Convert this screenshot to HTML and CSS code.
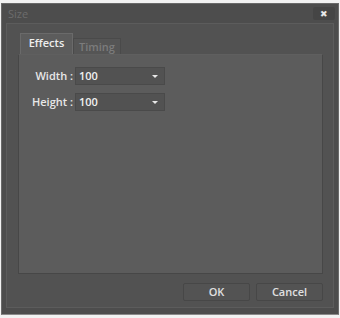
FILE: index.html
```html
<!DOCTYPE html>
<html lang="en">
<head>
    <meta charset="UTF-8">
    <meta name="viewport" content="width=device-width, initial-scale=1.0">
    <title>Size</title>
    <link rel="stylesheet" href="styles.css">
</head>
<body>
    <div class="dialog">
        <div class="titlebar">
            <span class="title">Size</span>
            <button class="close">&#x2716;</button>
        </div>
        <div class="frame">
            <div class="tabs">
                <div class="tab active">Effects</div>
                <div class="tab">Timing</div>
            </div>
            <div class="panel">
                <div class="row">
                    <label>Width :</label>
                    <div class="select"><span>100</span><span class="arrow"></span></div>
                </div>
                <div class="row">
                    <label>Height :</label>
                    <div class="select"><span>100</span><span class="arrow"></span></div>
                </div>
            </div>
            <div class="buttons">
                <button class="btn ok">OK</button>
                <button class="btn">Cancel</button>
            </div>
        </div>
    </div>
</body>
</html>
```
FILE: styles.css
```css
*{
    box-sizing: border-box;
    margin: 0;
    padding: 0;
    font-family: "Open Sans", "Liberation Sans", sans-serif;
    line-height: 14px;
}
body{
    background: #f2f2f2;
    width: 340px;
    height: 318px;
    padding: 3px 1px 3px 1px;
}
.dialog{
    height: 312px;
    background: #4d4d4d;
    border: 1px solid #6a6a6a;
    border-bottom-color: #8a8a8a;
    display: flex;
    flex-direction: column;
}
.titlebar{
    height: 19px;
    display: flex;
    align-items: center;
    justify-content: space-between;
    padding: 0 3px 0 6px;
}
.title{
    font-size: 11px;
    color: #6c6c6c;
}
.close{
    width: 22px;
    height: 13px;
    border: none;
    border-radius: 2px;
    background: #454545;
    color: #e8e8e8;
    font-size: 9px;
    line-height: 13px;
}
.frame{
    flex: 1;
    margin: 0 4px 6px 4px;
    border: 1px solid #5c5c5c;
    background: #525252;
    padding: 9px 10px 0 11px;
    display: flex;
    flex-direction: column;
}
.tabs{
    display: flex;
    padding-left: 2px;
}
.tab{
    font-size: 11px;
    font-weight: 600;
    color: #7c7c7c;
    width: 48px;
    text-align: center;
    padding: 1px 0 0;
    border: 1px solid #4a4a4a;
    border-bottom: none;
    background: #555555;
    margin-top: 5px;
}
.tab.active{
    color: #eeeeee;
    width: 53px;
    background: #5c5c5c;
    border-color: #6a6a6a;
    margin-top: 0;
    padding: 2px 0 3px;
}
.panel{
    height: 220px;
    background: #5c5c5c;
    border: 1px solid #474747;
    border-top-color: #5f5f5f;
    padding: 12px 0 0 8px;
    display: flex;
    flex-direction: column;
    gap: 8px;
}
.row{
    display: flex;
    align-items: center;
}
.row label{
    width: 46px;
    text-align: right;
    font-size: 11px;
    font-weight: 600;
    color: #e8e8e8;
    margin-right: 2px;
    white-space: nowrap;
}
.select{
    width: 90px;
    height: 18px;
    background: #525252;
    border: 1px solid #4a4a4a;
    display: flex;
    align-items: center;
    justify-content: space-between;
    padding: 0 6px 0 3px;
    font-size: 11px;
    color: #f0f0f0;
    font-weight: 600;
}
.arrow{
    width: 0;
    height: 0;
    border-left: 3px solid transparent;
    border-right: 3px solid transparent;
    border-top: 3px solid #e8e8e8;
}
.buttons{
    display: flex;
    justify-content: flex-end;
    gap: 6px;
    margin-top: 9px;
}
.btn{
    width: 67px;
    height: 18px;
    background: #535353;
    border: 1px solid #474747;
    border-radius: 2px;
    color: #e0e0e0;
    font-size: 11px;
    font-weight: 600;
}
```
